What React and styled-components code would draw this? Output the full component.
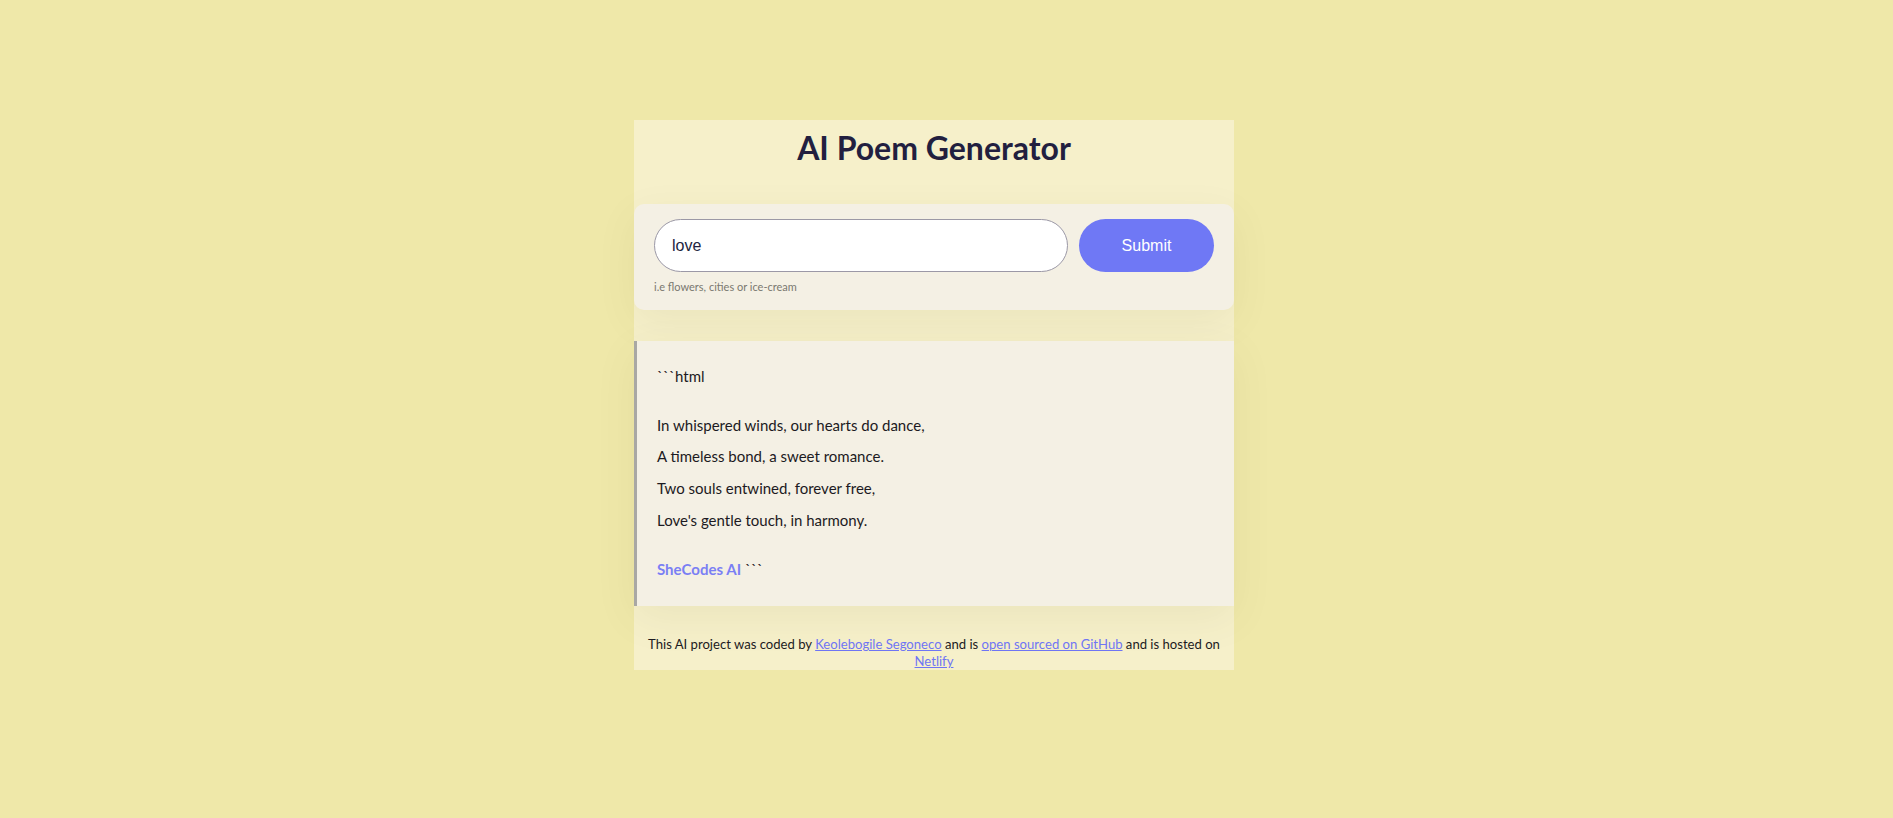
import React from 'react';
import styled, { createGlobalStyle } from 'styled-components';

const GlobalStyle = createGlobalStyle`
  html, body {
    margin: 0;
    padding: 0;
    background: #efe8a9;
    font-family: Lato, "Open Sans", sans-serif;
    color: #1f1c2e;
  }
`;

// Page layout
const Page = styled.div`
  display: flex;
  justify-content: center;
  padding: 120px 25px 0 0;
`;

const Container = styled.main`
  width: 600px;
  background: #f6f0ca;
`;

const Header = styled.header`
  padding: 8px 0 36px;
  text-align: center;
`;

const Title = styled.h1`
  margin: 0;
  font-size: 32px;
  line-height: 40px;
  font-weight: 700;
  color: #221f3f;
`;

// Search form
const FormCard = styled.section`
  background: #f4f0e4;
  border-radius: 10px;
  padding: 15px 20px 16px;
  box-shadow: 0 12px 40px rgba(90, 80, 0, 0.07);
`;

const FormRow = styled.form`
  display: flex;
  gap: 11px;
`;

const Input = styled.input`
  flex: 1;
  height: 53px;
  box-sizing: border-box;
  border: 1px solid #9b98a6;
  border-radius: 27px;
  background: #fff;
  padding: 0 17px;
  font-family: "Liberation Sans", Arial, sans-serif;
  font-size: 16px;
  color: #221f3f;
  outline: none;
`;

const SubmitButton = styled.button`
  width: 135px;
  height: 53px;
  border: none;
  border-radius: 27px;
  background: #6f78f5;
  color: #fff;
  font-family: "Liberation Sans", Arial, sans-serif;
  font-size: 16px;
  cursor: pointer;
`;

const Hint = styled.p`
  margin: 8px 0 0;
  font-size: 11px;
  line-height: 14px;
  color: #7a7870;
`;

// Poem output
const PoemCard = styled.section`
  margin-top: 31px;
  background: #f4f0e4;
  border-left: 3px solid #a9a8a4;
  padding: 20px 20px 21px;
  box-shadow: 0 12px 40px rgba(90, 80, 0, 0.07);
`;

const PoemLine = styled.p`
  margin: ${(p) => p.$gap || 0}px 0 0;
  font-size: 15px;
  line-height: 31.7px;
  color: #1c1a22;
`;

const Signature = styled.strong`
  color: #7a7ff4;
  font-weight: 700;
`;

// Footer
const Footer = styled.footer`
  margin-top: 30px;
  padding: 0 5px;
  text-align: center;
  font-size: 13.1px;
  line-height: 16.8px;
  color: #1c1a22;
`;

const FooterLink = styled.a`
  color: #6f75f4;
  text-decoration: underline;
`;

const lines = [
  'In whispered winds, our hearts do dance,',
  'A timeless bond, a sweet romance.',
  'Two souls entwined, forever free,',
  "Love's gentle touch, in harmony.",
];

export default function App() {
  return (
    <>
      <GlobalStyle />
      <Page>
        <Container>
          <Header>
            <Title>AI Poem Generator</Title>
          </Header>
          <FormCard>
            <FormRow onSubmit={(e) => e.preventDefault()}>
              <Input defaultValue="love" />
              <SubmitButton type="submit">Submit</SubmitButton>
            </FormRow>
            <Hint>i.e flowers, cities or ice-cream</Hint>
          </FormCard>
          <PoemCard>
            <PoemLine>```html</PoemLine>
            {lines.map((line, i) => (
              <PoemLine key={line} $gap={i === 0 ? 17 : 0}>
                {line}
              </PoemLine>
            ))}
            <PoemLine $gap={17}>
              <Signature>SheCodes AI</Signature> ```
            </PoemLine>
          </PoemCard>
          <Footer>
            This AI project was coded by{' '}
            <FooterLink href="#">Keolebogile Segoneco</FooterLink> and is{' '}
            <FooterLink href="#">open sourced on GitHub</FooterLink> and is
            hosted on <FooterLink href="#">Netlify</FooterLink>
          </Footer>
        </Container>
      </Page>
    </>
  );
}
